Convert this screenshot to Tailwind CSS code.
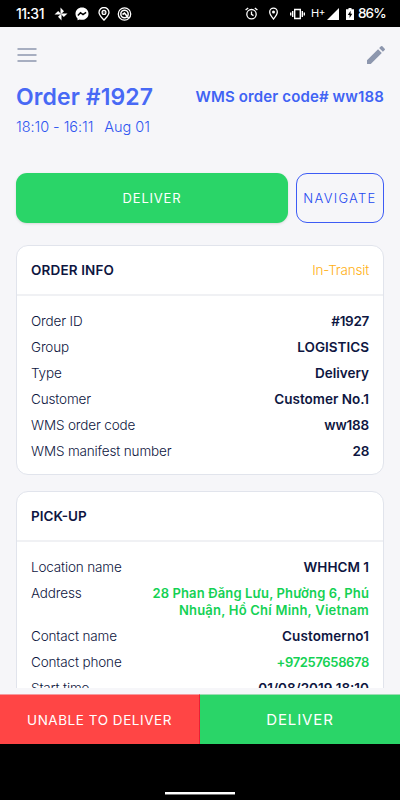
<!DOCTYPE html>
<html lang="en">
<head>
    <meta charset="UTF-8">
    <meta name="viewport" content="width=device-width, initial-scale=1.0">
    <title>Order #1927</title>

    <script src="https://cdn.jsdelivr.net/npm/@tailwindcss/browser@4"></script>
</head>
<body class="bg-black font-['Inter','Noto_Sans',sans-serif] text-[#0e1641]">
    <div class="flex flex-col w-[400px] h-[800px] overflow-hidden bg-[#f6f6f9]">

        <!-- Status bar -->
        <div class="flex items-center h-[27px] shrink-0 bg-black text-white pl-4 pr-4">
            <span class="w-[27px] text-[14px] font-medium tracking-[-0.5px] whitespace-nowrap">11:31</span>
            <svg class="ml-[11px] w-[14px] h-[14px]" viewBox="0 0 14 14" fill="currentColor">
                <path d="M6.5 0.5L10 4.2 7.6 6.6H6.5ZM13.5 6.5L9.8 10 7.4 7.6V6.5ZM7.5 13.5L4 9.8 6.4 7.4H7.5ZM0.5 7.5L4.2 4 6.6 6.4V7.5Z"/>
            </svg>
            <svg class="ml-[7px] w-[14px] h-[14px]" viewBox="0 0 14 14">
                <path d="M7 .6C3.2.6.5 3.3.5 6.8c0 1.9.8 3.5 2 4.6l.1 1.9 2-.8c.8.2 1.5.3 2.4.3 3.8 0 6.5-2.6 6.5-6.1S10.8.6 7 .6z" fill="white"/>
                <path d="M2.9 8.5L5.5 5.7 8 7.6 11.100 5.4" fill="none" stroke="black" stroke-width="1.5"/>
            </svg>
            <svg class="ml-2 w-[14px] h-[14px]" viewBox="0 0 14 14" fill="none" stroke="currentColor" stroke-width="1.3">
                <path d="M7 13.2C4.5 10.3 2 8 2 5.5a5 5 0 0 1 10 0C12 8 9.5 10.3 7 13.2z"/>
                <circle cx="7" cy="5.4" r="1.9"/>
                <path d="M7 5.2v.5"/>
            </svg>
            <svg class="ml-[6px] w-[15px] h-[14px]" viewBox="0 0 15 14" fill="none" stroke="currentColor">
                <circle cx="7.5" cy="7" r="6.2" stroke-width="1.3"/>
                <circle cx="7.5" cy="7" r="3.7" stroke-width="1.5"/>
                <path d="M5.5 7.5L7.5 6 11.5 11" stroke-width="1.6"/>
            </svg>

            <svg class="ml-auto w-[13px] h-[13px]" viewBox="0 0 13 13" fill="none" stroke="currentColor" stroke-width="1.3">
                <circle cx="6.5" cy="7.2" r="4.7"/>
                <path d="M6.5 4.4v3l2 1.2M.6 3L3.2.9M12.4 3L9.8.9"/>
            </svg>
            <svg class="ml-[10px] w-[11px] h-[13px]" viewBox="0 0 11 13">
                <path d="M5.5 12C3.5 9.5 1.7 7.3 1.7 4.9a3.8 3.8 0 0 1 7.6 0C9.3 7.3 7.5 9.5 5.5 12z" fill="none" stroke="white" stroke-width="1.3"/>
                <circle cx="5.5" cy="4.9" r="1.5" fill="white"/>
            </svg>
            <svg class="ml-[11px] w-[15px] h-[12px]" viewBox="0 0 15 12" fill="none" stroke="currentColor" stroke-width="1.4">
                <path d="M4.7 1.5h5.6v9H4.7zM2.7 3v6M12.3 3v6M.7 4.5v3M14.3 4.5v3"/>
            </svg>
            <span class="ml-[6px] w-[13px] text-[11px] leading-none whitespace-nowrap tracking-[-0.5px]">H<span class="relative -top-[2px] text-[10px]">+</span></span>
            <svg class="ml-[3px] w-[12px] h-[12px]" viewBox="0 0 12 12" fill="currentColor">
                <path d="M12 0v12H0z"/>
            </svg>
            <svg class="ml-[7px] w-[8px] h-[12px]" viewBox="0 0 8 12">
                <path d="M2.5 0h3v1.2H8V12H0V1.2h2.5z" fill="white"/>
                <path d="M4.6 2.8L1.8 7h1.8v3L6.3 5.8H4.6z" fill="black"/>
            </svg>
            <span class="ml-1 w-[26px] text-[13.5px] font-medium tracking-[-0.9px] whitespace-nowrap">86%</span>
        </div>

        <!-- Top navigation -->
        <div class="flex items-center justify-between h-[55px] shrink-0 pl-[17px] pr-3 text-[#8d97ae]">
            <svg class="w-5 h-[14px]" viewBox="0 0 20 14" fill="none" stroke="currentColor" stroke-width="1.5">
                <path d="M.5 1h19M.5 7h19M.5 13h19"/>
            </svg>
            <svg class="w-6 h-6" viewBox="0 0 24 24" fill="currentColor">
                <path d="M3 17.25V21h3.75L17.81 9.94l-3.75-3.75L3 17.25zM20.71 7.04a1 1 0 0 0 0-1.41l-2.34-2.34a1 1 0 0 0-1.41 0l-1.83 1.83 3.75 3.75 1.83-1.83z"/>
            </svg>
        </div>

        <!-- Order title -->
        <div class="shrink-0 h-[91px] px-4 text-[#4869f5]">
            <div class="flex items-center justify-between h-[30px] whitespace-nowrap">
                <h1 class="text-[23px] font-semibold tracking-[0.1px]">Order #1927</h1>
                <span class="text-[15px] font-semibold tracking-[0.13px] pt-px text-[#4063f4]">WMS order code# ww188</span>
            </div>
            <p class="mt-1 text-[14.5px] leading-[21px] font-light tracking-[-0.05px] text-[#2f55f0] whitespace-nowrap">18:10 - 16:11<span class="ml-[11px]">Aug 01</span></p>
        </div>

        <!-- Actions -->
        <div class="flex shrink-0 gap-2 h-[50px] px-4">
            <button class="w-[272px] pt-[2px] rounded-[11px] bg-[#2ad568] text-white text-[13px] tracking-[0.8px] shadow-sm">DELIVER</button>
            <button class="flex-1 pt-[2px] rounded-[11px] border border-[#3d5cf5] text-[#2448f0] text-[13px] font-light tracking-[1.3px]">NAVIGATE</button>
        </div>

        <!-- Cards -->
        <div class="flex flex-col flex-1 min-h-0 gap-4 mt-[22px] mb-[6px] px-4 overflow-hidden text-[13.5px] leading-[17px]">
            <section class="shrink-0 h-[230px] rounded-[12px] border border-[#e1e4ec] bg-white">
                <div class="flex items-center justify-between h-[50px] px-[14px] border-b-2 border-[#f0f1f4]">
                    <h2 class="font-semibold text-[13.5px] tracking-[0.15px]">ORDER INFO</h2>
                    <span class="font-light tracking-[-0.2px] text-[#ffb013]">In-Transit</span>
                </div>
                <dl class="flex flex-col gap-[9px] px-[14px] pt-[17px]">
                    <div class="flex justify-between"><dt class="font-light tracking-[-0.15px]">Order ID</dt><dd class="font-semibold tracking-[-0.3px]">#1927</dd></div>
                    <div class="flex justify-between"><dt class="font-light tracking-[-0.15px]">Group</dt><dd class="font-semibold">LOGISTICS</dd></div>
                    <div class="flex justify-between"><dt class="font-light tracking-[-0.15px]">Type</dt><dd class="font-semibold">Delivery</dd></div>
                    <div class="flex justify-between"><dt class="font-light tracking-[-0.15px]">Customer</dt><dd class="font-semibold">Customer No.1</dd></div>
                    <div class="flex justify-between"><dt class="font-light tracking-[-0.15px]">WMS order code</dt><dd class="font-semibold tracking-[-0.2px]">ww188</dd></div>
                    <div class="flex justify-between"><dt class="font-light tracking-[-0.15px]">WMS manifest number</dt><dd class="font-semibold tracking-[-0.3px]">28</dd></div>
                </dl>
            </section>

            <section class="shrink-0 h-[260px] rounded-[12px] border border-[#e1e4ec] bg-white">
                <div class="flex items-center h-[50px] px-[14px] border-b-2 border-[#f0f1f4]">
                    <h2 class="font-semibold text-[13.5px]">PICK-UP</h2>
                </div>
                <dl class="flex flex-col gap-[9px] px-[14px] pt-[17px]">
                    <div class="flex justify-between"><dt class="font-light tracking-[-0.15px]">Location name</dt><dd class="font-semibold">WHHCM 1</dd></div>
                    <div class="flex justify-between"><dt class="font-light tracking-[-0.15px]">Address</dt><dd class="font-semibold text-right text-[13px] tracking-[0.13px] text-[#14d154] whitespace-nowrap">28 Phan Đăng Lưu, Phường 6, Phú<br><span class="tracking-[0.22px]">Nhuận, Hồ Chí Minh, Vietnam</span></dd></div>
                    <div class="flex justify-between"><dt class="font-light tracking-[-0.15px]">Contact name</dt><dd class="font-semibold tracking-[0.1px]">Customerno1</dd></div>
                    <div class="flex justify-between"><dt class="font-light tracking-[-0.15px]">Contact phone</dt><dd class="font-semibold text-[13px] tracking-[-0.35px] text-[#14d154]">+97257658678</dd></div>
                    <div class="flex justify-between"><dt class="font-light tracking-[-0.15px]">Start time</dt><dd class="font-semibold">01/08/2019 18:10</dd></div>
                </dl>
            </section>
        </div>

        <!-- Bottom buttons -->
        <div class="flex shrink-0 h-[50px] text-white">
            <button class="w-[200px] pt-[2px] bg-[#ff4545] border-t border-r border-t-[#f59a9f] border-r-[#ec1f35] text-[13.5px] tracking-[0.55px]">UNABLE TO DELIVER</button>
            <button class="w-[200px] pt-[2px] bg-[#2ad568] border-t border-[#9fdcb5] text-[15px] tracking-[0.9px]">DELIVER</button>
        </div>
        <div class="flex shrink-0 items-end justify-center h-14 bg-black pb-[5px]">
            <div class="w-[70px] h-[3px] bg-white border-b border-[#777]"></div>
        </div>
    </div>
</body>
</html>
